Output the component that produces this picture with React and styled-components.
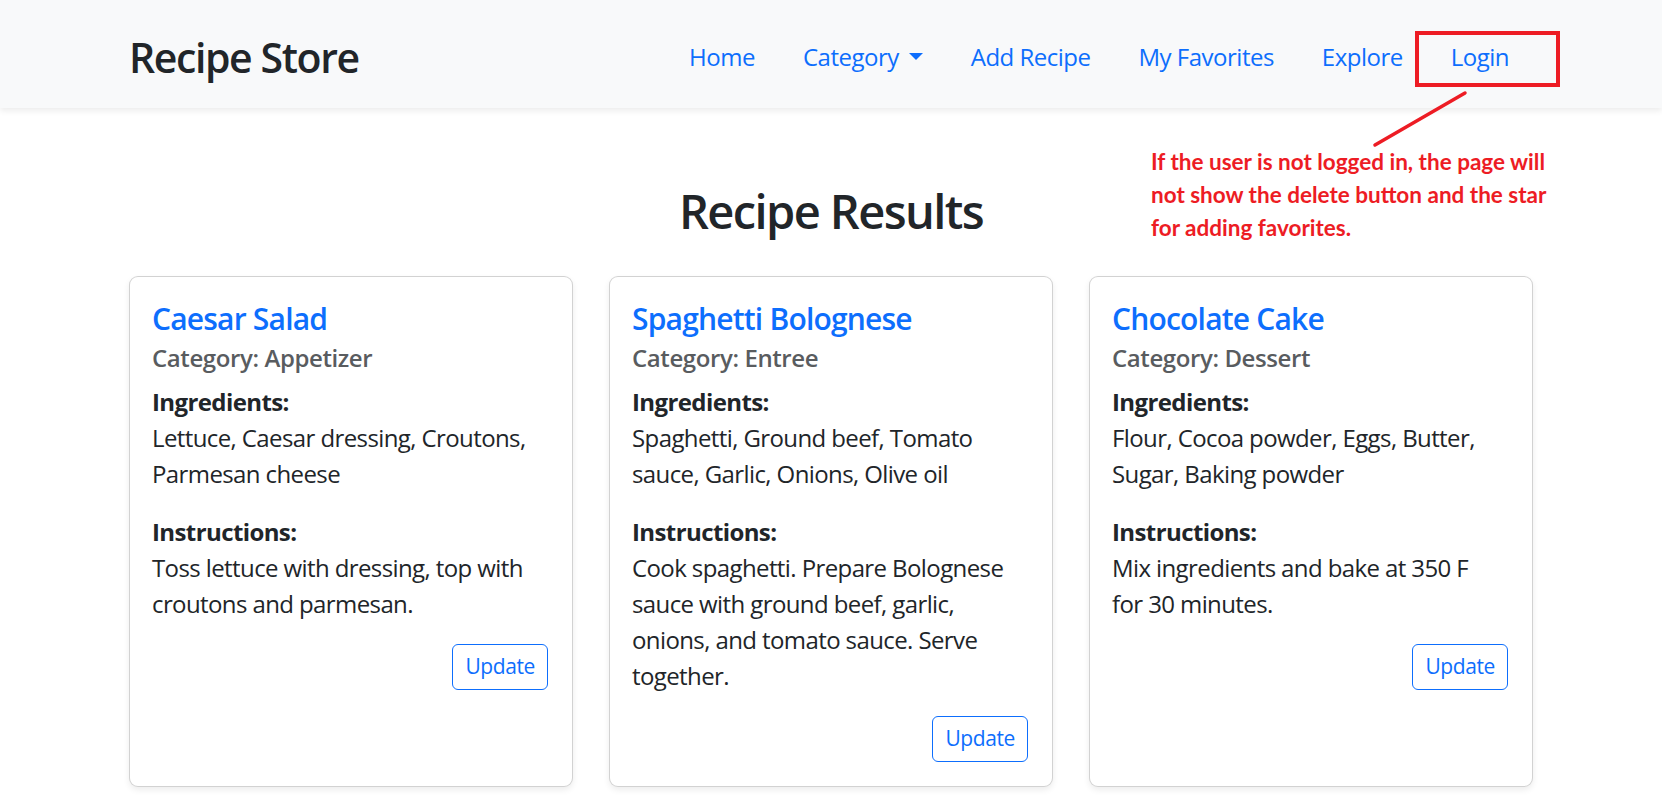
import React from "react";
import styled, { createGlobalStyle } from "styled-components";

const FONT = `"Open Sans", "Noto Sans", "Liberation Sans", sans-serif`;

const GlobalStyle = createGlobalStyle`
  html, body { margin: 0; padding: 0; }
  body {
    font-family: ${FONT};
    color: #212529;
    background: #ffffff;
    -webkit-font-smoothing: antialiased;
  }
  * { box-sizing: border-box; }
`;

const Page = styled.div`
  position: relative;
  min-height: 801px;
`;

const Navbar = styled.nav`
  background: #f8f9fa;
  box-shadow: 0 3px 6px rgba(0, 0, 0, 0.075);
  padding: 27px 0 21px;
  position: relative;
  z-index: 1;
`;

const Container = styled.div`
  width: 1440px;
  margin: 0 auto;
  padding: 0 18px;
`;

const NavInner = styled(Container)`
  display: flex;
  align-items: center;
  justify-content: space-between;
`;

const Brand = styled.a`
  font-size: 41px;
  line-height: 60px;
  font-weight: 600;
  color: #212529;
  text-decoration: none;
  letter-spacing: -1.4px;
`;

const NavList = styled.ul`
  display: flex;
  list-style: none;
  margin: 0;
  padding: 0;
`;

const NavItem = styled.li`
  position: relative;
`;

const NavLink = styled.a`
  display: block;
  padding: 12px 24px;
  font-size: 24px;
  line-height: 36px;
  color: #0d6efd;
  text-decoration: none;
  letter-spacing: -0.5px;
  ${(p) =>
    p.$dropdown &&
    `
    &::after {
      content: "";
      display: inline-block;
      margin-left: 10px;
      vertical-align: 6px;
      border-top: 7.2px solid;
      border-right: 7.2px solid transparent;
      border-left: 7.2px solid transparent;
      border-bottom: 0;
    }
  `}
`;

const RedBox = styled.span`
  position: absolute;
  left: -12px;
  top: 4px;
  width: 145px;
  height: 56px;
  border: 4px solid #ed1c24;
  pointer-events: none;
`;

const Note = styled.div`
  position: absolute;
  left: 1140px;
  top: 88px;
  width: 440px;
  z-index: 2;
`;

const NoteLine = styled.svg`
  position: absolute;
  left: 225px;
  top: 0;
  overflow: visible;
`;

const NoteText = styled.p`
  margin: 0;
  padding: 57px 0 0 11px;
  font-family: "Lato", "Open Sans", sans-serif;
  font-weight: 700;
  font-size: 22.5px;
  line-height: 33px;
  color: #ed1c24;
  letter-spacing: 0;
`;

const Main = styled(Container)`
  padding-top: 75px;
`;

const Heading = styled.h2`
  margin: 0 0 35px;
  text-align: center;
  font-size: 47px;
  line-height: 57.6px;
  font-weight: 600;
  letter-spacing: -1.6px;
`;

const CardGrid = styled.div`
  display: grid;
  grid-template-columns: repeat(3, 1fr);
  gap: 36px;
  align-items: stretch;
`;

const Card = styled.div`
  border: 1.5px solid rgba(0, 0, 0, 0.175);
  border-radius: 9px;
  padding: 24px 24px 24px 22px;
  box-shadow: 0 3px 6px rgba(0, 0, 0, 0.075);
  display: flex;
  flex-direction: column;
  background: #fff;
`;

const CardTitle = styled.h5`
  margin: 0 0 7px;
  font-size: 30px;
  line-height: 36px;
  font-weight: 600;
  color: #0d6efd;
  letter-spacing: -0.8px;
`;

const CardSubtitle = styled.h6`
  margin: 0 0 12px;
  font-size: 24px;
  line-height: 28.8px;
  font-weight: 600;
  color: #595c5f;
  letter-spacing: -0.4px;
`;

const Section = styled.p`
  margin: 0 0 22px;
  max-width: 386px;
  font-size: 24px;
  line-height: 36px;
  letter-spacing: -0.6px;
  strong { font-weight: 700; }
`;

const Actions = styled.div`
  display: flex;
  justify-content: flex-end;
`;

const OutlineButton = styled.button`
  font-family: ${FONT};
  font-size: 21px;
  line-height: 31.5px;
  padding: 6px 12px;
  border: 1.5px solid #0d6efd;
  border-radius: 6px;
  color: #0d6efd;
  background: transparent;
  letter-spacing: -0.4px;
  cursor: pointer;
`;

const recipes = [
  {
    title: "Caesar Salad",
    category: "Appetizer",
    ingredients: "Lettuce, Caesar dressing, Croutons, Parmesan cheese",
    instructions: "Toss lettuce with dressing, top with croutons and parmesan.",
  },
  {
    title: "Spaghetti Bolognese",
    category: "Entree",
    ingredients: "Spaghetti, Ground beef, Tomato sauce, Garlic, Onions, Olive oil",
    instructions:
      "Cook spaghetti. Prepare Bolognese sauce with ground beef, garlic, onions, and tomato sauce. Serve together.",
  },
  {
    title: "Chocolate Cake",
    category: "Dessert",
    ingredients: "Flour, Cocoa powder, Eggs, Butter, Sugar, Baking powder",
    instructions: "Mix ingredients and bake at 350 F for 30 minutes.",
  },
];

export default function App() {
  return (
    <Page>
      <GlobalStyle />
      <Navbar>
        <NavInner>
          <Brand href="#">Recipe Store</Brand>
          <NavList>
            <NavItem><NavLink href="#">Home</NavLink></NavItem>
            <NavItem><NavLink href="#" $dropdown>Category</NavLink></NavItem>
            <NavItem><NavLink href="#">Add Recipe</NavLink></NavItem>
            <NavItem><NavLink href="#">My Favorites</NavLink></NavItem>
            <NavItem><NavLink href="#">Explore</NavLink></NavItem>
            <NavItem>
              <NavLink href="#">Login</NavLink>
              <RedBox />
            </NavItem>
          </NavList>
        </NavInner>
      </Navbar>

      <Note>
        <NoteLine width="100" height="60">
          <line x1="100" y1="5" x2="10" y2="57" stroke="#ed1c24" strokeWidth="3.5" strokeLinecap="round" />
        </NoteLine>
        <NoteText>
          If the user is not logged in, the page will
          <br />
          not show the delete button and the star
          <br />
          for adding favorites.
        </NoteText>
      </Note>

      <Main>
        <Heading>Recipe Results</Heading>
        <CardGrid>
          {recipes.map((r) => (
            <Card key={r.title}>
              <CardTitle>{r.title}</CardTitle>
              <CardSubtitle>Category: {r.category}</CardSubtitle>
              <Section>
                <strong>Ingredients:</strong>
                <br />
                {r.ingredients}
              </Section>
              <Section>
                <strong>Instructions:</strong>
                <br />
                {r.instructions}
              </Section>
              <Actions>
                <OutlineButton>Update</OutlineButton>
              </Actions>
            </Card>
          ))}
        </CardGrid>
      </Main>
    </Page>
  );
}
